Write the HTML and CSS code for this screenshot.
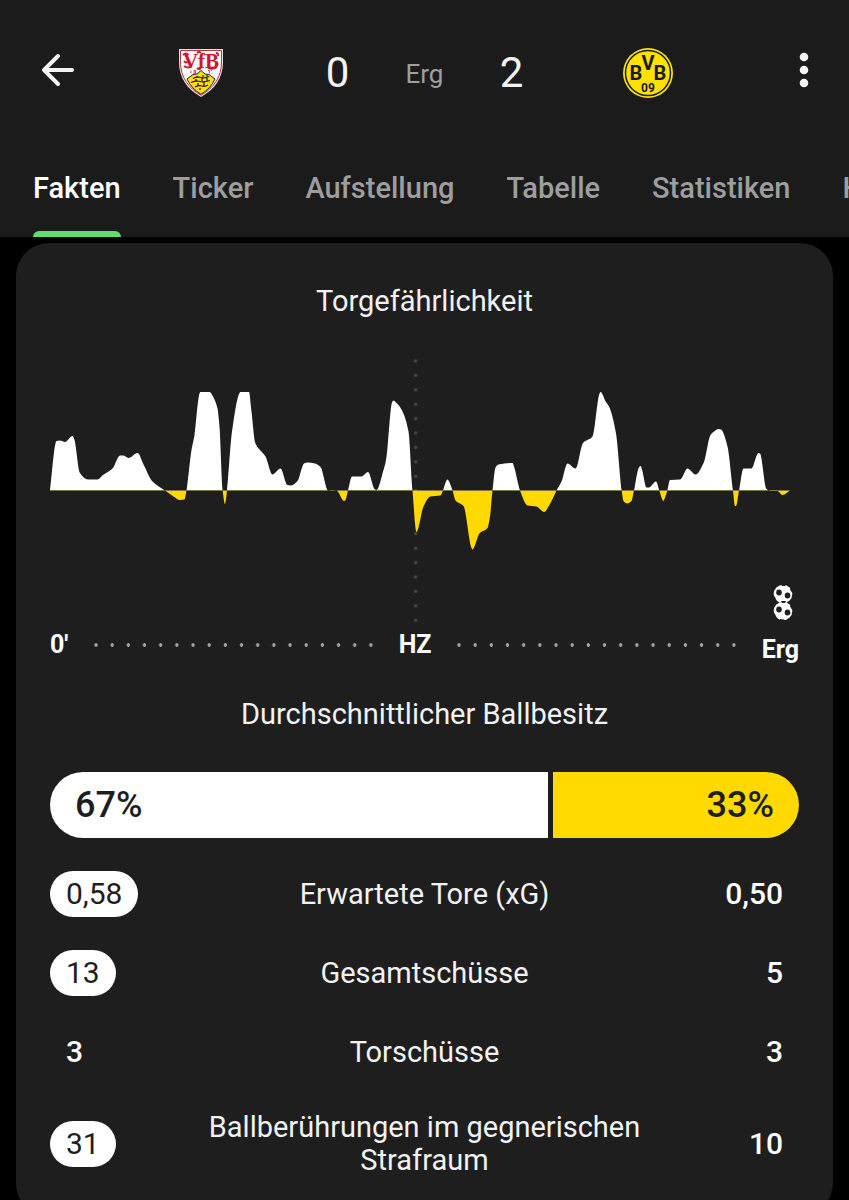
FILE: index.html
```html
<!DOCTYPE html>
<html lang="de">
<head>
<meta charset="utf-8">
<meta name="viewport" content="width=device-width, initial-scale=1">
<title>VfB Stuttgart 0 – 2 Borussia Dortmund</title>
<link rel="stylesheet" href="styles.css">
</head>
<body>
<header class="header">
  <div class="scorebar">
    <button class="icon-button back" aria-label="Zurück">
      <svg width="36" height="36" viewBox="0 0 36 36" fill="none" stroke="#f4f4f4" stroke-width="4" stroke-linecap="round" stroke-linejoin="round"><path d="M32 18H4M18 4 4 18 18 32"/></svg>
    </button>
    <svg class="crest" width="46" height="50" viewBox="0 0 46 50" role="img" aria-label="VfB Stuttgart">
      <path d="M1 1h44v13c0 16-8 27-22 35C9 41 1 30 1 14z" fill="#f3dede"/>
      <path d="M2.500 2.500h41V14c0 15-7.500 25.500-20.500 33.300C10 39.500 2.500 29 2.500 14z" fill="#fff" stroke="#b3343f"/>
      <path d="M9 31 15 26.500 19 26l4-3.500 4 3.500 4 .5 6 4.500C34 38 29 42.500 23 46.300 17 42.500 12 38 9 31z" fill="#f9dc16" stroke="#222" stroke-width="1"/>
      <path d="M15 30.500q4-2 8-1t8-1M13 34.500q5-2 9-1t10-1M17 39q4-2 7-1t6-1M19 28v2M25 27v2M29 27v2M18 31v3M24 30v3M29 30v3M20 35v3M26 34v4M22 40v2" fill="none" stroke="#222" stroke-width="1.200"/>
      <text class="crest-name" x="23" y="20">VfB</text>
      <path d="M5 7q3-3 5 0M6 13q2 3 4 0M6 18q4 3 8 0M19 20q2 2 4 0M38 5q3 0 2 3M30 20q5 2 9-1M19 5q2-2 4 0" fill="none" stroke="#d3152f" stroke-width="1.800"/>
      <path d="M13 22.500v3M16 22.500h1.500v3H16zM30 22.500h1.500v3M34 22.500h-1M33.500 25.500h1" fill="none" stroke="#d3152f" stroke-width=".8"/>
    </svg>
    <span class="goals">0</span>
    <span class="status">Erg</span>
    <span class="goals">2</span>
    <svg class="crest" width="50" height="50" viewBox="0 0 50 50" role="img" aria-label="Borussia Dortmund">
      <circle cx="25" cy="25" r="25" fill="#fde100"/>
      <circle cx="25" cy="25" r="22.500" fill="none" stroke="#1b1b1b" stroke-width="1.500"/>
      <text class="bvb" x="13" y="32">B</text><text class="bvb" x="25" y="22">V</text><text class="bvb" x="37" y="32">B</text>
      <text class="bvb-year" x="25" y="44">09</text>
    </svg>
    <button class="icon-button more" aria-label="Mehr">
      <svg width="10" height="36" viewBox="0 0 10 36" fill="#f4f4f4"><circle cx="5" cy="5" r="4.300"/><circle cx="5" cy="18" r="4.300"/><circle cx="5" cy="31" r="4.300"/></svg>
    </button>
  </div>
  <nav class="tabs">
    <a class="tab active" href="#fakten" aria-current="page">Fakten</a>
    <a class="tab" href="#ticker">Ticker</a>
    <a class="tab" href="#aufstellung">Aufstellung</a>
    <a class="tab" href="#tabelle">Tabelle</a>
    <a class="tab" href="#statistiken">Statistiken</a>
    <a class="tab" href="#head-to-head">H2H</a>
  </nav>
</header>
<main class="card">
  <h2 class="title">Torgefährlichkeit</h2>
  <svg class="chart" viewBox="50 357 749 266" role="img" aria-label="Torgefährlichkeit im Spielverlauf">
    <defs>
      <clipPath id="home"><rect x="49" y="357" width="750" height="133.500"/></clipPath>
      <clipPath id="away"><rect x="49" y="490.500" width="750" height="132"/></clipPath>
      <g id="ball">
        <circle r="9.300" fill="#fff"/>
        <g fill="#1e1e1e"><ellipse cx="-4" cy="-1.500" rx="2.800" ry="3"/><ellipse cx="4.500" cy="1.500" rx="2.800" ry="3"/><path d="M-2-10h5L2-8-1-8zM8-6l2 4-1 .5-2-3zM-9.800 2l1.500.5 2 4-1.500 2zM-3 8l4 .5 2 2h-6z"/></g>
      </g>
    </defs>
    <path d="M415.700 361V622" stroke="#444" stroke-width="3.600" stroke-linecap="round" stroke-dasharray="0 14.400"/>
    <path id="home-area" fill="#fff" clip-path="url(#home)"/>
    <path id="away-area" fill="#ffd900" clip-path="url(#away)"/>
    <use href="#ball" x="783" y="594"/>
    <use href="#ball" x="783" y="611"/>
  </svg>
  <div class="timeline">
    <span>0'</span><i class="dots"></i><span>HZ</span><i class="dots"></i><span class="end">Erg</span>
  </div>
  <h2 class="title">Durchschnittlicher Ballbesitz</h2>
  <div class="possession" style="grid-template-columns:67fr 33fr">
    <div class="share home">67%</div>
    <div class="share away">33%</div>
  </div>
  <ul class="stats">
    <li class="stat"><span class="value best">0,58</span><span class="label">Erwartete Tore (xG)</span><span class="value">0,50</span></li>
    <li class="stat"><span class="value best">13</span><span class="label">Gesamtschüsse</span><span class="value">5</span></li>
    <li class="stat"><span class="value">3</span><span class="label">Torschüsse</span><span class="value">3</span></li>
    <li class="stat"><span class="value best">31</span><span class="label">Ballberührungen im gegnerischen Strafraum</span><span class="value">10</span></li>
  </ul>
</main>
<script src="chart.js"></script>
</body>
</html>
```
FILE: styles.css
```css
* { box-sizing: border-box; }
body {
  margin: 0;
  height: 100vh;
  overflow: hidden;
  background: #000;
  color: #f2f2f2;
  font-family: Roboto, "Liberation Sans", sans-serif;
}
.header { background: #1b1b1b; overflow: hidden; }
.scorebar {
  display: grid;
  grid-template-columns: 116px minmax(0, 1fr) 102px 72px 102px minmax(0, 1fr) 116px;
  align-items: center;
  justify-items: center;
  height: 146px;
}
.icon-button { border: 0; padding: 0; background: none; line-height: 0; margin-bottom: 6px; }
.more { justify-self: end; margin-right: 40px; }
.goals { font-size: 42px; line-height: 48px; }
.status { font-size: 26px; line-height: 32px; color: #9e9e9e; padding-top: 2px; }
.crest-name { font: bold 21px "Liberation Serif", serif; fill: #d3152f; text-anchor: middle; }
.bvb { font: bold 20px Roboto, sans-serif; fill: #1b1b1b; text-anchor: middle; }
.bvb-year { font: bold 12px Roboto, sans-serif; fill: #1b1b1b; text-anchor: middle; }
.tabs { display: flex; gap: 52px; height: 91px; padding-left: 33px; }
.tab {
  flex: none;
  padding-top: 25px;
  border-radius: 6px 6px 0 0;
  color: #9e9e9e;
  font-size: 29px;
  font-weight: 500;
  line-height: 34px;
  text-decoration: none;
}
.active { color: #fff; }
.active::after {
  content: "";
  display: block;
  height: 6px;
  margin-top: 26px;
  border-radius: 6px 6px 0 0;
  background: #61dd6d;
}
.card {
  margin: 6px 16px 0;
  padding: 40px 34px 36px;
  border-radius: 33px;
  background: #1e1e1e;
}
.title { margin: 0; font-size: 29px; font-weight: 400; line-height: 36px; text-align: center; }
.chart { display: block; width: 100%; margin-top: 38px; }
.timeline {
  display: flex;
  align-items: center;
  height: 44px;
  color: #fff;
  font-size: 25px;
  font-weight: 700;
  line-height: 28px;
}
.dots {
  flex: 1;
  height: 4px;
  margin: 0 20px;
  background-image: radial-gradient(circle, #a6a6a6 0 1.500px, transparent 2px);
  background-size: 16px 4px;
  background-repeat: space no-repeat;
}
.end { padding-top: 10px; }
.timeline + .title { margin-top: 29px; }
.possession { display: grid; gap: 5px; margin-top: 40px; border-radius: 33px; overflow: hidden; }
.share {
  padding: 13px 25px;
  color: #1e1e1e;
  font-size: 36px;
  font-weight: 500;
  line-height: 40px;
}
.home { background: #fff; }
.away { background: #ffd900; text-align: right; }
.stats { display: grid; gap: 33px; margin: 33px 0 0; padding: 0; list-style: none; }
.stat {
  display: grid;
  grid-template-columns: 1fr minmax(0, 450px) 1fr;
  align-items: center;
  font-size: 29px;
  line-height: 33px;
}
.label { padding: 3px 0; text-align: center; }
.value { justify-self: start; padding: 6px 16px 7px; color: #fff; font-size: 30px; font-weight: 500; }
.value:last-child { justify-self: end; }
.best { border-radius: 23px; background: #fff; color: #1e1e1e; font-weight: 400; }
```
FILE: chart.js
```js
const base = 490.5;
const points = [
  [50,490.5],[56.5,441],[60,440.5],[65,442],[72.5,436],[74.5,440],[80,473],[88,479.5],[97.5,479.5],[103,475],
  [112.5,468.5],[120,455.5],[123.5,455.5],[128.5,458],[137.5,453],[144,465.5],[152.5,481.5],[165,490.5],
  [173.5,496.5],[180,500],[184.5,499.5],[186.5,490.5],[191.5,450],[194.5,435],[199.5,393.5],[200.5,392],
  [209.5,392],[213.5,397.5],[217.5,408.5],[219.5,426.5],[222.7,490.5],[225,504],[227,490.5],[232,431.5],
  [239.5,393],[240.5,392],[249,392],[251.5,411.5],[255.5,443.5],[260,450],[265.5,456.5],[272.5,474.5],
  [280.5,468.5],[287.5,485],[290.5,485.5],[297.5,481],[304,463.5],[307.5,462.5],[315,463.5],[320.5,467],
  [328,490.5],[332,491],[336.5,490.5],[344,501],[345.5,500],[348,490.5],[352,476.5],[361.5,476.5],[368,472],
  [375,489.5],[376.5,490],[383.5,470],[386,460],[392,402.5],[393.5,400.5],[395.5,402],[401.5,409.5],
  [408.5,431.5],[412.5,490.5],[416.5,532],[423.5,506.5],[430.5,496.5],[440.5,495.5],[443,490.5],[446.5,480.5],
  [447.5,479.5],[448.5,480.5],[452.5,490.5],[455.5,500.5],[463.5,506],[471.5,548],[472.5,549.5],[473.5,548.5],
  [479.5,533.5],[487.5,528],[490,516.5],[492.5,490.5],[495.5,467.5],[498.5,464.5],[512.5,463],[514,466.5],
  [520,490.5],[527.5,505.5],[536.5,506.5],[544,512],[550,504],[556.5,490.5],[561.5,481.5],[567.5,463.5],
  [575.5,468.5],[583,443],[592.5,436.5],[599.5,393.5],[600.5,392],[606,402],[609.5,407.5],[616,433.5],
  [621.7,490.5],[623.5,501],[627,503.5],[631.5,501],[634,490.5],[638.5,468.5],[640.5,466],[642,469.5],
  [646.5,487.5],[649,487.5],[656,481.5],[659.3,490.5],[662.5,500],[663.3,501],[664,500],[667.3,490.5],
  [670,480],[680,479.5],[687.5,468.5],[695.5,474.5],[704,462],[710.5,435],[713.5,432],[718.5,429],
  [721,429.5],[727.5,446.5],[733,490.5],[735,506],[736,506],[739,490.5],[743.5,468.5],[751.5,468.5],
  [758.5,453],[760,453.5],[766.5,489],[770,491],[777.5,491],[782.5,495],[790,490.5]
];

// Monotone cubic interpolation keeps the peaks at the data values.
function areaPath(p) {
  const slope = p.slice(1).map((q, i) => (q[1] - p[i][1]) / (q[0] - p[i][0]));
  const tangent = p.map((q, i) => {
    const a = slope[i - 1], b = slope[i];
    if (a === undefined) return b;
    if (b === undefined) return a;
    return a * b <= 0 ? 0 : 2 * a * b / (a + b);
  });
  let d = `M${p[0][0]} ${base}L${p[0][0]} ${p[0][1]}`;
  for (let i = 1; i < p.length; i++) {
    const h = (p[i][0] - p[i - 1][0]) / 3;
    d += `C${p[i - 1][0] + h} ${p[i - 1][1] + tangent[i - 1] * h} ${p[i][0] - h} ${p[i][1] - tangent[i] * h} ${p[i][0]} ${p[i][1]}`;
  }
  return d + `V${base}Z`;
}

const d = areaPath(points);
document.getElementById("home-area").setAttribute("d", d);
document.getElementById("away-area").setAttribute("d", d);
```
